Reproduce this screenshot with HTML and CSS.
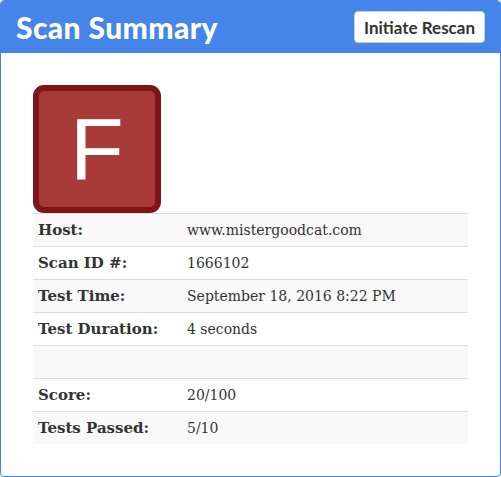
FILE: index.html
```html
<!DOCTYPE html>
<html lang="en">
<head>
  <meta charset="UTF-8">
  <title>Scan Summary</title>
  <link rel="stylesheet" href="styles.css">
</head>
<body>
  <div class="panel">
    <div class="panel-heading">
      <h1>Scan Summary</h1>
      <button class="rescan">Initiate Rescan</button>
    </div>
    <div class="panel-body">
      <div class="grade">F</div>
      <table class="summary">
        <tr><th>Host:</th><td>www.mistergoodcat.com</td></tr>
        <tr><th>Scan ID #:</th><td>1666102</td></tr>
        <tr><th>Test Time:</th><td>September 18, 2016 8:22 PM</td></tr>
        <tr><th>Test Duration:</th><td>4 seconds</td></tr>
        <tr><th></th><td></td></tr>
        <tr><th>Score:</th><td>20/100</td></tr>
        <tr><th>Tests Passed:</th><td>5/10</td></tr>
      </table>
    </div>
  </div>
</body>
</html>
```

FILE: styles.css
```css
body {
  margin: 0;
  background-color: #fff;
}

.panel {
  border: 1px solid #4584e8;
  border-radius: 4px;
  height: 475px;
  overflow: hidden;
}

.panel-heading {
  background-color: #4584e8;
  height: 52px;
  display: flex;
  align-items: center;
  justify-content: space-between;
  padding: 0 15px;
}

.panel-heading h1 {
  margin: 0;
  color: #fff;
  font-family: Lato, sans-serif;
  font-weight: 900;
  font-size: 30px;
  letter-spacing: 0.4px;
}

.rescan {
  background-color: #fff;
  color: #333;
  border: 1px solid #ccc;
  border-radius: 4px;
  font-family: Lato, sans-serif;
  font-size: 17px;
  font-weight: 700;
  width: 131px;
  height: 32px;
  padding: 0;
}

.panel-body {
  padding: 32px 32px 0 32px;
}

.grade {
  width: 116px;
  height: 116px;
  border: 6px solid #7f1416;
  border-radius: 11px;
  background-color: #a93a3a;
  color: #fff;
  font-family: "Liberation Sans", Arial, sans-serif;
  font-size: 88px;
  line-height: 116px;
  text-align: center;
}

.summary {
  width: 435px;
  border-collapse: collapse;
  font-family: "DejaVu Serif", Georgia, serif;
  font-size: 14px;
  color: #333;
}

.summary th,
.summary td {
  height: 32px;
  padding: 0 5px;
  border-top: 1px solid #ddd;
  text-align: left;
  vertical-align: middle;
}

.summary th {
  width: 139px;
  font-size: 15px;
}

.summary tr:nth-child(odd) {
  background-color: #f9f9f9;
}
```
